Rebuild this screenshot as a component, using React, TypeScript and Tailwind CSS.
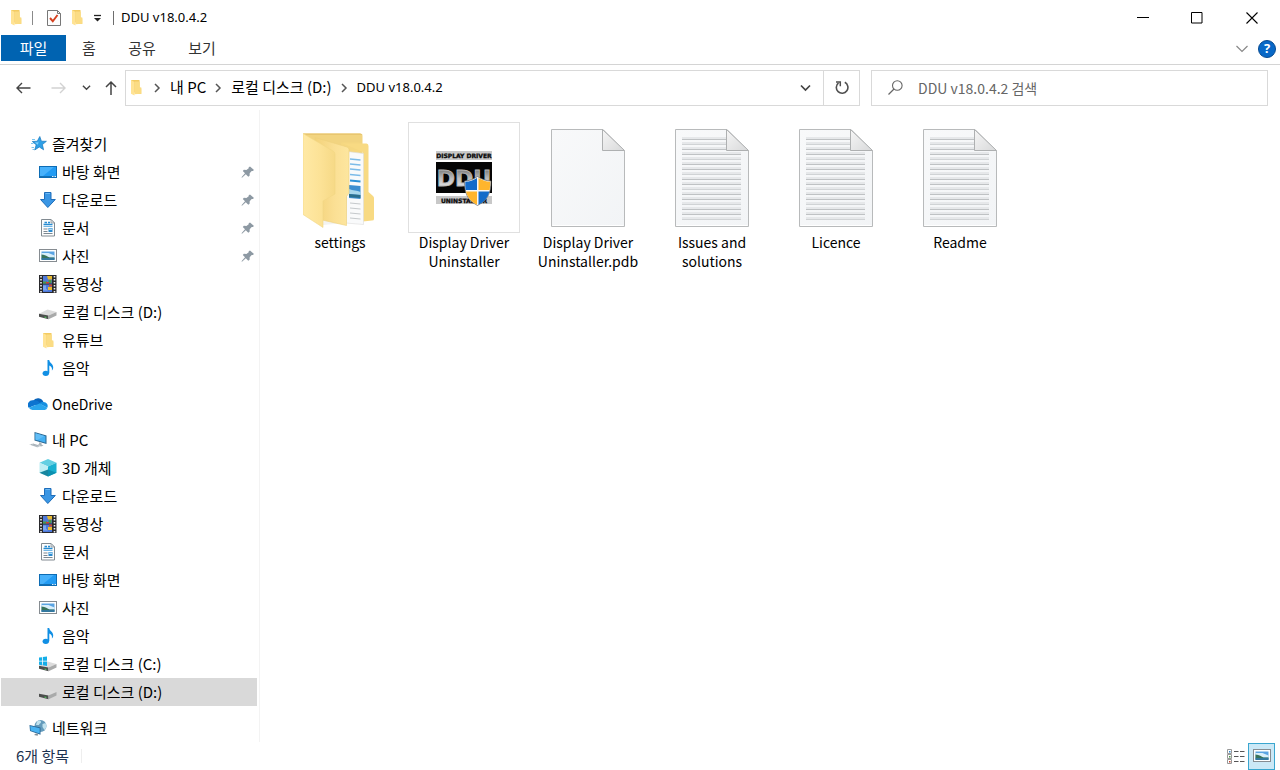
import type { ReactNode } from "react";

/* ---------- small icons ---------- */

function SmallFolder() {
  return (
    <svg width="12" height="17" viewBox="0 0 12 17" aria-hidden="true">
      <path d="M1 1h8.500v12.500H1z" fill="#f3cb62" />
      <path d="M8 8.500h3.300v6.500H5V13h3z" fill="#f7d573" />
      <path d="M1 1l3.500 2v13.500L1 14.800z" fill="#ffe394" />
      <path d="M4.500 2.500H9.800v6l1.500 1V14.800L4.500 15.200z" fill="#fbdc84" />
    </svg>
  );
}

function StarIcon() {
  return (
    <svg width="18" height="18" viewBox="0 0 18 18" aria-hidden="true">
      <path d="M10.800 1.500l1.600 4.700 5 .1-4 3.300 1.200 5.200-4.300-2.800-4.600 3 1.500-5.200L3.300 6.500l5-.3z" fill="#2d9fe6" stroke="#1577bd" strokeWidth=".7" />
      <path d="M10.600 4l-1.200 3.300-3.600.2 3 2.200z" fill="#7fd0fb" />
      <path d="M3 4.500h3M2 8.500h2.500M2.500 12.500h2.500M3.500 14.500h1.500" stroke="#7cc6f0" strokeWidth="1" />
    </svg>
  );
}

function DesktopIcon() {
  return (
    <svg width="18" height="18" viewBox="0 0 18 18" aria-hidden="true">
      <rect x=".5" y="3.500" width="17" height="11" fill="#229bf3" stroke="#0d6cb4" />
      <path d="M1 4h14L4 13H1z" fill="#47b1fb" />
      <path d="M1 13h16v1H1z" fill="#1270b5" />
      <path d="M13 13h1.500v1H13zM15.500 13H17v1h-1.500z" fill="#d8efff" />
    </svg>
  );
}

function DownloadIcon() {
  return (
    <svg width="18" height="18" viewBox="0 0 18 18" aria-hidden="true">
      <path d="M5.500 1.500h6.500v7h4.300L8.800 16.500 1.500 8.500h4z" fill="#3a96e4" stroke="#1d6dba" />
      <path d="M6.500 2.500h4.500" fill="none" stroke="#6db9f3" />
    </svg>
  );
}

function DocumentIcon() {
  return (
    <svg width="18" height="18" viewBox="0 0 18 18" aria-hidden="true">
      <path d="M2.500.5h9.500l3.500 3.500v13H2.500z" fill="#fdfdfd" stroke="#818a91" />
      <path d="M12 .5V4h3.500z" fill="#e1e5e8" stroke="#818a91" strokeWidth=".7" />
      <path d="M5.500 3.500H8M4.500 5.500h9M9 3.500h2" stroke="#258bd2" strokeWidth="1.300" />
      <path d="M4.500 7.500h9" stroke="#73b6e3" />
      <path d="M4.500 10h4M4.500 12.500h4M4.500 14.500h9" stroke="#7c8790" />
      <path d="M9.500 9h4v4h-4z" fill="#2b8bd0" />
      <path d="M10 9.500h3v1.500h-3z" fill="#a9d9f6" />
    </svg>
  );
}

function PictureIcon() {
  return (
    <svg width="18" height="18" viewBox="0 0 18 18" aria-hidden="true">
      <rect x=".5" y="2.500" width="17" height="12" fill="#fff" stroke="#868c91" />
      <path d="M2.500 4.500h13v8.500h-13z" fill="#5aa4e3" />
      <path d="M2.500 6h7L15.500 8.500v2h-13z" fill="#d9effb" />
      <path d="M2.500 7.500c4 .3 6 2 8 3h5v1h-13z" fill="#39735a" />
      <path d="M2.500 11h13v2h-13z" fill="#33789e" />
    </svg>
  );
}

function VideoIcon() {
  return (
    <svg width="18" height="18" viewBox="0 0 18 18" aria-hidden="true">
      <path d="M0 0h17.500v18H0z" fill="#29292c" />
      <path d="M4 1h9v7.500H4zM4 9.500h9V17H4z" fill="#4d78d9" />
      <path d="M8 1h5v3.500H9zM9 12h4v3H9z" fill="#e7b92f" />
      <path d="M4 6.500h4v2H4zM9.500 5h3v3h-3z" fill="#4c9a46" />
      <path d="M7 7h3v1.500H7zM10 9.500h3v2h-3z" fill="#cc4238" />
      <path d="M4 10.500h3v3l2 2H4z" fill="#78a5f1" />
      <path d="M2 1v17M15.500 1v17" stroke="#f2f2f2" strokeWidth="1.600" strokeDasharray="1.600 1.400" />
    </svg>
  );
}

function DriveBody() {
  return (
    <>
      <path d="M0 10.800L8.500 6.500 17.500 9l-8 3.500z" fill="#dcdcdc" />
      <path d="M0 10.800l9.500 1.700v3.800L0 13.800z" fill="#4c4e4d" />
      <path d="M9.500 12.500l8-3.500v3.500l-8 3.800z" fill="#a9aaaa" />
      <path d="M5.500 13.500l1.800.4v1l-1.800-.4z" fill="#50d65d" />
    </>
  );
}

function DriveIcon() {
  return (
    <svg width="18" height="18" viewBox="0 0 18 18" aria-hidden="true">
      <DriveBody />
    </svg>
  );
}

function SystemDriveIcon() {
  return (
    <svg width="18" height="18" viewBox="0 0 18 18" aria-hidden="true">
      <DriveBody />
      <path d="M0 2.600l3-.4v3.600H0zM3.800 2.100L8 1.500v4.300H3.800zM0 6.600h3v3.600l-3-.4zM3.800 6.600H8v4.300l-4.200-.6z" fill="#14aee8" />
    </svg>
  );
}

function FolderIcon() {
  return (
    <span className="flex w-[18px] justify-center">
      <SmallFolder />
    </span>
  );
}

function MusicIcon() {
  return (
    <svg width="18" height="18" viewBox="0 0 18 18" aria-hidden="true">
      <ellipse cx="6.800" cy="14.300" rx="3.200" ry="2.600" fill="#118fe4" />
      <path d="M8.500 14.300V1h1.700c.3 3 4.200 3.800 4 7.500 0 1.300-.6 2.400-1.300 3.100.5-2.800-.8-4.400-2.600-5v7.700z" fill="#118fe4" />
    </svg>
  );
}

function OneDriveIcon() {
  return (
    <svg width="20" height="18" viewBox="0 0 20 18" className="shrink-0" aria-hidden="true">
      <path d="M5 6A5.800 5.800 0 0 1 15.500 7.200L10 12z" fill="#0a64bb" />
      <path d="M5.500 5.300a4.700 4.700 0 0 0-4.700 7.500L12 8.300A6.500 6.500 0 0 0 5.500 5.300z" fill="#0c74d0" />
      <path d="M15.500 7a4.100 4.100 0 0 1 3.800 5.800L11 8.400A5 5 0 0 1 15.500 7z" fill="#168fe0" />
      <path d="M.8 12.800L11.500 8.400l7.800 4.400A3 3 0 0 1 16.800 15H4.500a4.500 4.500 0 0 1-3.700-2.200z" fill="#2aa5ec" />
    </svg>
  );
}

function ComputerIcon() {
  return (
    <svg width="18" height="18" viewBox="0 0 18 18" aria-hidden="true">
      <path d="M5.500 1L17.500 4.500v8.500L5.500 9.500z" fill="#29648e" />
      <path d="M6.500 2.300L16.500 5.200v6.500L6.500 8.800z" fill="#43aff2" />
      <path d="M6.500 2.300l9 2.600-7.500 4.300-1.500-.4z" fill="#62bdf6" />
      <path d="M10 11.200l2.500.8v1.600l2 1-2.500.8-3.500-1.600 1.700-.5z" fill="#a7b1b8" />
      <path d="M0 13.500l4-1 8 2.500-3.500 1.500z" fill="#cfd5d9" />
      <path d="M2 13.500l6.500 2M4 13l6 2" stroke="#8f9aa2" strokeWidth=".6" />
    </svg>
  );
}

function CubeIcon() {
  return (
    <svg width="18" height="18" viewBox="0 0 18 18" aria-hidden="true">
      <path d="M9 0l8.500 3.800L9 7.500.5 3.800z" fill="#63cfe2" />
      <path d="M.5 3.800L9 7.500v10L.5 13.800z" fill="#bdeef4" />
      <path d="M17.500 3.800L9 7.500v10l8.500-3.700z" fill="#1ab0d0" />
      <path d="M.5 13.800L9 10.500v7z" fill="#16869f" />
      <path d="M9 10.500l8.500 3.300L9 17.500z" fill="#0d91b0" />
    </svg>
  );
}

function NetworkIcon() {
  return (
    <svg width="18" height="18" viewBox="0 0 18 18" aria-hidden="true">
      <circle cx="11.500" cy="7" r="6" fill="#649bbb" />
      <path d="M8 2.500c2-1.500 4-1 4 .5s-2 1.500-2 3H7zM13.500 5l3-1c1.500 3 1 5-1 7l-2-3z" fill="#c1e2ee" />
      <path d="M.5 6l11 2.500v7.200L1 12z" fill="#276797" />
      <path d="M1.300 7l9.400 2.200v5.300l-9-3z" fill="#49b3f2" />
      <path d="M7 14.500l2 .7-.3 1.600-3.700-.8z" fill="#7c8a94" />
    </svg>
  );
}

function PinIcon() {
  return (
    <svg width="14" height="14" viewBox="0 0 14 14" aria-hidden="true">
      <path d="M9 1.500l4 3.500-1.200 1L10.700 5.900 8.700 8.300l-.1 2.400-1.300 1.100-2.500-2.600L1 12.800l-.5-.5L4 8.300 1.800 6l1.100-1.200 2.500.1L7.700 3.200 7.700 2.300z" fill="#8d99a3" />
    </svg>
  );
}

function Chevron({ dir, className }: { dir: "right" | "down"; className?: string }) {
  return (
    <svg width="10" height="10" viewBox="0 0 10 10" className={className} aria-hidden="true">
      <path d={dir === "right" ? "M3 1l4 4-4 4" : "M1 3l4 4 4-4"} fill="none" stroke="currentColor" strokeWidth="1.500" />
    </svg>
  );
}

/* ---------- large file icons ---------- */

function LargeFolder() {
  return (
    <svg width="74" height="100" viewBox="0 0 74 100" aria-hidden="true">
      <defs>
        <linearGradient id="flap" x1="0" x2="1" y1="0" y2="0">
          <stop offset="0" stopColor="#ffe9a5" />
          <stop offset=".55" stopColor="#fce296" />
          <stop offset="1" stopColor="#f6d986" />
        </linearGradient>
        <linearGradient id="pane" x1="0" x2="1" y1="0" y2="0">
          <stop offset="0" stopColor="#f3d27a" />
          <stop offset=".6" stopColor="#fbe095" />
          <stop offset="1" stopColor="#fde69f" />
        </linearGradient>
      </defs>
      <path d="M0 5.500H57q2.500 0 2.500 2.500v40L20 92z" fill="#f2d480" />
      <path d="M0 5.500H57q2 0 2.500 1.500H3z" fill="#e8c670" />
      <path d="M38 14.500H56q2.500 0 2.500 2.500L60 30v60H40z" fill="#f5d780" />
      <path d="M40 15.500H63.500q2 0 2 2.500V64l4.500 4q1 1 1 2v21q0 1.500-2 1.500l-9 1V24z" fill="#f8da83" />
      <path d="M20 88h23v7l-23 2z" fill="#f3f3f1" />
      <path d="M44 23.500l16.500 2V96.500L43 95z" fill="#f9fafb" stroke="#dcdcdc" strokeWidth=".6" />
      <path d="M47 31l10.500 1M47 36l10.500 1M47 41l10.500 1M47 46.500l10.500 1" stroke="#7cbbe8" strokeWidth="1.300" />
      <path d="M47 52.500l10.500 1" stroke="#2c91d7" strokeWidth="1.800" />
      <path d="M46 57l11.500 1v13L46 70z" fill="#3c8ed0" />
      <path d="M46 61c4 2 8 1 11.500 3v3L46 66z" fill="#a8d7ec" />
      <path d="M46 66l11.500 1v3L46 69z" fill="#2b6f8d" />
      <path d="M47 75l10.500 1M47 80l10.500 1M47 85l10.500 1M47 90l10.500 1" stroke="#c5c9cc" />
      <path d="M12 9.500L44 19q2 .6 2 2.500V65l-2.500 3.500V97.500L19 92z" fill="url(#pane)" stroke="#efd07a" strokeWidth=".6" />
      <path d="M0 5.500L30 23q2 1 2 3V66l-12 7v26.500L0 86.500z" fill="url(#flap)" stroke="#f2d684" strokeWidth=".6" />
    </svg>
  );
}

function Paper({ lines }: { lines?: boolean }) {
  return (
    <svg width="74" height="100" viewBox="0 0 74 100" aria-hidden="true">
      <defs>
        <linearGradient id="sheet" x1="0" x2="1" y1="0" y2="1">
          <stop offset="0" stopColor="#f8f9fa" />
          <stop offset="1" stopColor="#f2f4f6" />
        </linearGradient>
        <linearGradient id="fold" x1="0" x2="1" y1="0" y2="1">
          <stop offset="0" stopColor="#f6f6f6" />
          <stop offset="1" stopColor="#d8d9da" />
        </linearGradient>
      </defs>
      <path d="M.5 1.500H52L73.500 23v75.500H.5z" fill="url(#sheet)" stroke="#b8babb" />
      <path d="M1.500 97.500h71" stroke="#fff" />
      {lines &&
        Array.from({ length: 17 }, (_, i) => {
          const end = i < 3 ? 52 : 66;
          return (
            <g key={i}>
              <path d={`M7 ${10 + i * 5}H${end}`} stroke="#e6e8ea" strokeWidth="2" />
              <path d={`M7 ${11.5 + i * 5}H${end}`} stroke={i % 3 === 1 ? "#d0d3d5" : "#bfc2c4"} />
            </g>
          );
        })}
      <path d="M51.500 1.500V22.500H73.500z" fill="url(#fold)" stroke="#aeb0b1" strokeLinejoin="round" />
    </svg>
  );
}

function DduIcon() {
  return (
    <svg width="56" height="56" viewBox="0 0 56 56" aria-hidden="true">
      <defs>
        <linearGradient id="silver" x1="0" x2="0" y1="0" y2="1">
          <stop offset="0" stopColor="#606060" />
          <stop offset=".5" stopColor="#bdbdbd" />
          <stop offset="1" stopColor="#f3f3f3" />
        </linearGradient>
      </defs>
      <path d="M0 1h56v9H0zM0 46h56v8H0z" fill="#c8c8c8" />
      <path d="M0 12h56v31H0z" fill="#050505" />
      <text x="28" y="8" textAnchor="middle" fontFamily="DejaVu Sans" fontWeight="700" fontSize="6" fill="#090909" stroke="#090909" strokeWidth=".3">DISPLAY DRIVER</text>
      <text x="28" y="36" textAnchor="middle" fontFamily="DejaVu Sans" fontWeight="700" fontSize="22" fill="url(#silver)" stroke="#b8b8b8" strokeWidth=".8">DDU</text>
      <text x="28" y="53" textAnchor="middle" fontFamily="DejaVu Sans" fontWeight="700" fontSize="6" fill="#090909" stroke="#090909" strokeWidth=".3">UNINSTALLER</text>
      <path d="M41.500 26.500c4.500 3 8.500 4.300 13.500 4.500 0 12-3 19-13.500 24.500C31 50 28.500 43 28.500 31c5-.2 8.500-1.500 13-4.500z" fill="#f7f7f7" stroke="#666" strokeWidth=".7" />
      <path d="M41 28v12H29.600a50 50 0 0 1-.3-8.200c4.600-.2 8-1.500 11.700-3.800zM42.500 41.500h10.800C52 47.800 48.700 51.500 42.500 54.800z" fill="#136bc9" />
      <path d="M42.500 28c4 2.300 7.500 3.600 11.700 3.800 0 3-.1 5.600-.5 8.200H42.500zM41 41.500v13.300c-6-3.300-9.500-7-11-13.300z" fill="#ffb52d" />
    </svg>
  );
}

/* ---------- data ---------- */

type Entry = { label: string; icon: ReactNode; root?: boolean; pinned?: boolean; current?: boolean; latin?: boolean };

const groups: { name: string; entries: Entry[] }[] = [
  {
    name: "quick",
    entries: [
      { label: "즐겨찾기", icon: <StarIcon />, root: true },
      { label: "바탕 화면", icon: <DesktopIcon />, pinned: true },
      { label: "다운로드", icon: <DownloadIcon />, pinned: true },
      { label: "문서", icon: <DocumentIcon />, pinned: true },
      { label: "사진", icon: <PictureIcon />, pinned: true },
      { label: "동영상", icon: <VideoIcon /> },
      { label: "로컬 디스크 (D:)", icon: <DriveIcon /> },
      { label: "유튜브", icon: <FolderIcon /> },
      { label: "음악", icon: <MusicIcon /> },
    ],
  },
  { name: "onedrive", entries: [{ label: "OneDrive", icon: <OneDriveIcon />, root: true, latin: true }] },
  {
    name: "pc",
    entries: [
      { label: "내 PC", icon: <ComputerIcon />, root: true },
      { label: "3D 개체", icon: <CubeIcon /> },
      { label: "다운로드", icon: <DownloadIcon /> },
      { label: "동영상", icon: <VideoIcon /> },
      { label: "문서", icon: <DocumentIcon /> },
      { label: "바탕 화면", icon: <DesktopIcon /> },
      { label: "사진", icon: <PictureIcon /> },
      { label: "음악", icon: <MusicIcon /> },
      { label: "로컬 디스크 (C:)", icon: <SystemDriveIcon /> },
      { label: "로컬 디스크 (D:)", icon: <DriveIcon />, current: true },
    ],
  },
  { name: "network", entries: [{ label: "네트워크", icon: <NetworkIcon />, root: true }] },
];

const files: { label: string; icon: ReactNode; framed?: boolean }[] = [
  { label: "settings", icon: <LargeFolder /> },
  { label: "Display Driver Uninstaller", icon: <DduIcon />, framed: true },
  { label: "Display Driver Uninstaller.pdb", icon: <Paper /> },
  { label: "Issues and solutions", icon: <Paper lines /> },
  { label: "Licence", icon: <Paper lines /> },
  { label: "Readme", icon: <Paper lines /> },
];

const versionText = "text-[13px] [font-family:'Noto_Sans',sans-serif]";

/* ---------- page parts ---------- */

function TitleBar() {
  return (
    <header className="flex h-[35px] items-center pl-2.5">
      <SmallFolder />
      <span className="ml-2.5 h-3.5 w-px bg-[#8a8a8a]" />
      <button aria-label="속성" className="ml-3.5">
        <svg width="14" height="18" viewBox="0 0 14 18">
          <path d="M.5 1.500h10l3 3v12H.5z" fill="#fdfdfd" stroke="#777" />
          <path d="M10.500 1.500v3h3" fill="none" stroke="#777" />
          <path d="M3 9l2.800 3.200L10.500 6" fill="none" stroke="#d5401e" strokeWidth="1.900" />
        </svg>
      </button>
      <button aria-label="새 폴더" className="ml-2.5">
        <SmallFolder />
      </button>
      <button aria-label="빠른 실행 도구 모음 사용자 지정" className="ml-2.5">
        <svg width="9" height="10" viewBox="0 0 9 10">
          <path d="M1 2.500h7" stroke="#222" strokeWidth="1.300" />
          <path d="M1 5h7L4.500 8.500z" fill="#222" />
        </svg>
      </button>
      <span className="ml-[11px] h-3.5 w-px bg-[#6d6d6d]" />
      <h1 className={`ml-[7px] flex-1 ${versionText}`}>DDU v18.0.4.2</h1>
      <button aria-label="최소화" className="flex h-full w-[54px] items-center justify-center">
        <svg width="12" height="12" viewBox="0 0 12 12"><path d="M0 5.500h12" stroke="#000" /></svg>
      </button>
      <button aria-label="최대화" className="flex h-full w-[54px] items-center justify-center">
        <svg width="12" height="12" viewBox="0 0 12 12"><path d="M.5.5h10.500v10.500H.5z" fill="none" stroke="#000" /></svg>
      </button>
      <button aria-label="닫기" className="flex h-full w-14 items-center justify-center">
        <svg width="12" height="12" viewBox="0 0 12 12"><path d="M.5.5l11 11M11.500.5l-11 11" stroke="#000" strokeWidth="1.100" /></svg>
      </button>
    </header>
  );
}

function Ribbon() {
  return (
    <div className="flex h-[30px] items-start border-b border-[#d4d4d4] pr-1 pl-px text-[15px] text-[#333]">
      <button className="h-[26px] w-[65px] bg-[#0063b1] text-white">파일</button>
      <button className="h-[26px] w-[46px]">홈</button>
      <button className="h-[26px] w-[60px]">공유</button>
      <button className="h-[26px] w-[60px]">보기</button>
      <div className="flex h-7 flex-1 items-center justify-end gap-2">
        <button aria-label="리본 확장" className="p-0.5">
          <svg width="12" height="8" viewBox="0 0 12 8"><path d="M.5 1l5.500 5.500L11.500 1" fill="none" stroke="#888" strokeWidth="1.200" /></svg>
        </button>
        <button aria-label="도움말" className="flex size-[18px] items-center justify-center rounded-full border border-[#074a91] bg-[#0868c7] text-[13px] font-bold text-white [font-family:'Noto_Sans',sans-serif]">
          ?
        </button>
      </div>
    </div>
  );
}

function AddressRow() {
  const crumbs = [
    { label: "내 PC", style: "text-[15px]" },
    { label: "로컬 디스크 (D:)", style: "text-[15px]" },
    { label: "DDU v18.0.4.2", style: versionText },
  ];
  return (
    <div className="flex h-[45px] items-center pr-3">
      <div className="flex w-[125px] items-center pl-4 text-[#444]">
        <button aria-label="뒤로">
          <svg width="15" height="14" viewBox="0 0 15 14"><path d="M6 2L1 7l5 5M1 7h13.500" fill="none" stroke="currentColor" strokeWidth="1.400" /></svg>
        </button>
        <button aria-label="앞으로" className="ml-5 text-[#d2d2d2]">
          <svg width="15" height="14" viewBox="0 0 15 14"><path d="M9 2l5 5-5 5M14 7H.5" fill="none" stroke="currentColor" strokeWidth="1.400" /></svg>
        </button>
        <button aria-label="최근 위치" className="ml-4">
          <Chevron dir="down" className="size-[9px]" />
        </button>
        <button aria-label="위로" className="ml-3.5">
          <svg width="12" height="15" viewBox="0 0 12 15"><path d="M1 7l5-5 5 5M6 2v13" fill="none" stroke="currentColor" strokeWidth="1.500" /></svg>
        </button>
      </div>
      <div className="flex h-9 min-w-0 flex-1 items-center border border-[#d9d9d9] pl-1">
        <SmallFolder />
        <nav aria-label="경로" className="flex flex-1 items-center pl-[3px]">
          {crumbs.map((c) => (
            <span key={c.label} className="flex items-center">
              <Chevron dir="right" className="mr-2 ml-[7px] text-[#555]" />
              <a href="#path" className={c.style}>{c.label}</a>
            </span>
          ))}
        </nav>
        <button aria-label="이전 위치" className="flex h-full w-[35px] items-center justify-center text-[#444]">
          <svg width="11" height="8" viewBox="0 0 11 8"><path d="M1 1.500L5.500 6 10 1.500" fill="none" stroke="currentColor" strokeWidth="1.700" /></svg>
        </button>
        <button aria-label="새로 고침" className="flex h-full w-9 items-center justify-center border-l border-[#d9d9d9] text-[#505050]">
          <svg width="14" height="15" viewBox="0 0 14 15">
            <path d="M9.800 2.300A5.800 5.800 0 1 1 3.500 2.900" fill="none" stroke="currentColor" strokeWidth="1.600" />
            <path d="M1 2h4.300v4.300" fill="none" stroke="currentColor" strokeWidth="1.500" />
          </svg>
        </button>
      </div>
      <label className="ml-[11px] flex h-9 w-[397px] items-center border border-[#d9d9d9] pl-4">
        <svg width="15" height="15" viewBox="0 0 15 15" aria-hidden="true">
          <circle cx="9.300" cy="5.500" r="4.800" fill="none" stroke="#666" strokeWidth="1.100" />
          <path d="M6 9L.5 14.500" stroke="#666" strokeWidth="1.200" />
        </svg>
        <input
          type="search"
          aria-label="DDU v18.0.4.2 검색"
          placeholder="DDU v18.0.4.2 검색"
          className="ml-[15px] min-w-0 flex-1 bg-transparent text-sm outline-none placeholder:text-[#666]"
        />
      </label>
    </div>
  );
}

function Sidebar() {
  return (
    <nav aria-label="탐색 창" className="flex w-[260px] shrink-0 flex-col gap-2 border-r border-[#f3f3f3] pt-5 pr-0.5 pl-px">
      {groups.map((g) => (
        <ul key={g.name}>
          {g.entries.map((e) => (
            <li key={e.label}>
              <a
                href="#folder"
                aria-current={e.current ? "page" : undefined}
                className={`flex h-7 items-center gap-[5px] pr-0.5 ${e.root ? "pl-7" : "pl-[38px]"} ${e.current ? "bg-[#d9d9d9]" : ""}`}
              >
                <span className="flex w-[18px] shrink-0 justify-center">{e.icon}</span>
                <span className={`flex-1 leading-6 whitespace-nowrap ${e.latin ? "text-sm/6" : "text-[15px]/6"}`}>{e.label}</span>
                {e.pinned && <PinIcon />}
              </a>
            </li>
          ))}
        </ul>
      ))}
    </nav>
  );
}

function FileGrid() {
  return (
    <main className="flex-1 pt-3 pl-[18px]">
      <ul className="flex flex-wrap">
        {files.map((f) => (
          <li key={f.label} className="w-[124px]">
            <button className="flex w-full flex-col items-center px-1.5">
              <span className={`flex h-[111px] w-28 items-center justify-center border ${f.framed ? "border-[#e0e0e0]" : "border-transparent"}`}>
                {f.icon}
              </span>
              <span className="text-sm/[19px]">{f.label}</span>
            </button>
          </li>
        ))}
      </ul>
    </main>
  );
}

function StatusBar() {
  return (
    <footer className="flex h-7 items-center pr-[5px] pl-4 text-[15px]/6 text-[#1e3350]">
      <span>6개 항목</span>
      <span className="ml-3 h-3.5 w-px bg-[#eeeeee]" />
      <div className="ml-auto flex items-center gap-px">
        <button aria-label="자세히" className="flex size-[22px] items-center justify-center">
          <svg width="18" height="15" viewBox="0 0 18 15">
            <path d="M.5.500h4v4h-4zM.5 5.500h4v4h-4zM.5 10.500h4v4h-4z" fill="#fff" stroke="#999" />
            <path d="M2 2h1.500v1.500H2z" fill="#2b86d1" />
            <path d="M2 7h1.500v1.500H2z" fill="#4c9a46" />
            <path d="M2 12h1.500v1.500H2z" fill="#c0422e" />
            <path d="M7 2.500h4.500M13 2.500h4.500M7 7.500h4.500M13 7.500h4.500M7 12.500h4.500M13 12.500h4.500" stroke="#555" />
          </svg>
        </button>
        <button aria-label="큰 아이콘" aria-pressed="true" className="flex size-[27px] items-center justify-center border border-[#3aa6cf] bg-[#cbe8f6]">
          <PictureIcon />
        </button>
      </div>
    </footer>
  );
}

export default function App() {
  return (
    <div className="flex min-h-screen flex-col bg-white text-black [font-family:'Noto_Sans_CJK_KR',sans-serif]">
      <TitleBar />
      <Ribbon />
      <AddressRow />
      <div className="flex flex-1">
        <Sidebar />
        <FileGrid />
      </div>
      <StatusBar />
    </div>
  );
}
